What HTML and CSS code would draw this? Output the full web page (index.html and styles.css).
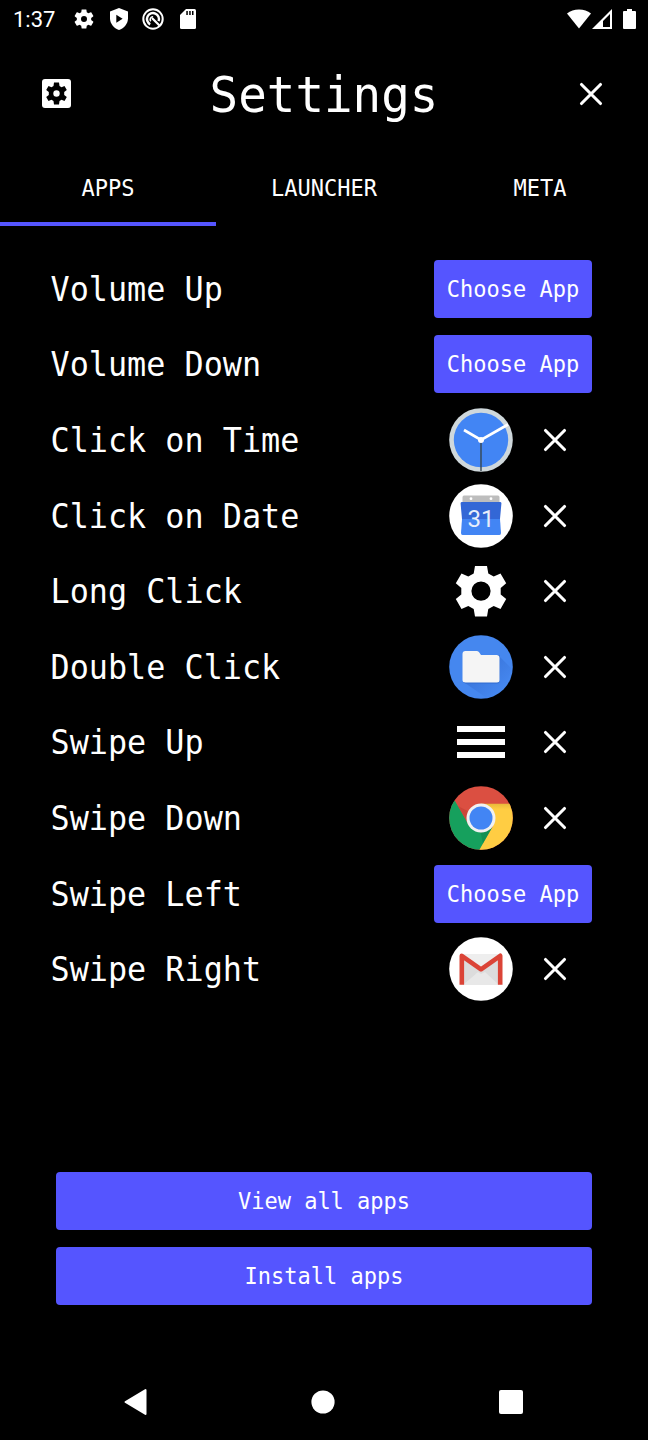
FILE: index.html
```html
<!DOCTYPE html>
<html lang="en">
<head>
<meta charset="utf-8">
<title>Settings</title>
<link rel="stylesheet" href="styles.css">
</head>
<body>
<svg class="defs" width="0" height="0">
  <defs>
    <symbol id="close" viewBox="0 0 24 24"><path d="M2.500 2.500 21.500 21.500M21.500 2.500 2.500 21.500" stroke="#fff" stroke-width="3.100" stroke-linecap="round"/></symbol>
    <symbol id="gear" viewBox="0 0 24 24"><path fill="#fff" d="M19.14 12.94c.04-.3.06-.61.06-.94 0-.32-.02-.64-.07-.94l2.03-1.58c.18-.14.23-.41.12-.61l-1.92-3.32c-.12-.22-.37-.29-.59-.22l-2.39.96c-.5-.38-1.03-.7-1.62-.94l-.36-2.54c-.04-.24-.24-.41-.48-.41h-3.84c-.24 0-.43.17-.47.41l-.36 2.54c-.59.24-1.13.57-1.62.94l-2.39-.96c-.22-.08-.47 0-.59.22L2.74 8.87c-.12.21-.08.47.12.61l2.03 1.58c-.05.3-.09.63-.09.94s.02.64.07.94l-2.03 1.58c-.18.14-.23.41-.12.61l1.92 3.32c.12.22.37.29.59.22l2.39-.96c.5.38 1.03.7 1.62.94l.36 2.54c.05.24.24.41.48.41h3.84c.24 0 .44-.17.47-.41l.36-2.54c.59-.24 1.13-.56 1.62-.94l2.39.96c.22.08.47 0 .59-.22l1.92-3.32c.12-.22.07-.47-.12-.61l-2.01-1.58zM12 15a3 3 0 1 1 0-6 3 3 0 0 1 0 6z"/></symbol>
  </defs>
</svg>
<div class="screen">
  <div class="status">
    <span class="time">1:37</span>
    <svg class="s-gear" viewBox="0 0 24 24"><use href="#gear"/></svg>
    <svg class="s-shield" viewBox="0 0 18 22"><path fill="#fff" d="M9 0 18 3.400v6.800c0 5.500-3.800 9.800-9 11.800-5.200-2-9-6.300-9-11.800V3.400z"/><path d="M6.300 6.700v8l6.300-4z"/></svg>
    <svg class="s-round" viewBox="0 0 22 22" fill="none" stroke="#fff"><circle cx="11" cy="11" r="9.700" stroke-width="2"/><path stroke-width="2.400" d="M8.200 16.400a6 6 0 1 1 8.400-3.200"/><path stroke-width="2.200" d="m10 10 7.500 7.500"/><path stroke-width="1.600" d="M8.800 13.300a2.800 2.800 0 0 1 2.300-4.600"/></svg>
    <svg class="s-card" viewBox="0 0 16 20"><path fill="#fff" d="M6 0h8.500Q16 0 16 1.500v17q0 1.500-1.500 1.500h-13Q0 20 0 18.500V6z"/><path d="M6.300 2h1.500v4H6.300zM9.200 2h1.500v4H9.200zM12 2h1.500v4H12z"/></svg>
    <span class="spacer"></span>
    <svg class="s-wifi" viewBox="0 0 24 20"><path fill="#fff" d="M0 4.600Q5 .500 12 .500t12 4.100L12 19.500z"/></svg>
    <svg class="s-signal" viewBox="0 0 20 20"><path fill="#fff" fill-rule="evenodd" d="M0 20 20 0v20zM18 5 11 12v6h7z"/></svg>
    <svg class="s-battery" viewBox="0 0 13 20"><path fill="#fff" d="M4 0h5v2h3q1 0 1 1v16q0 1-1 1H1q-1 0-1-1V3q0-1 1-1h3z"/></svg>
  </div>
  <header class="header">
    <svg class="app-settings" viewBox="0 0 29 29"><rect width="29" height="29" rx="3" fill="#fff"/><path d="M12 3.500h5l.5 3.600 2 1.100 3-1.200 2.300 3.900-2.600 2v3.200l2.600 2-2.300 3.900-3-1.200-2 1.100-.5 3.600h-5l-.5-3.600-2-1.100-3 1.200-2.300-3.900 2.600-2v-3.200l-2.600-2 2.300-3.900 3 1.200 2-1.100z"/><circle cx="14.500" cy="14.500" r="3.200" fill="#fff"/></svg>
    <h1 class="title">Settings</h1>
    <svg class="close"><use href="#close"/></svg>
  </header>
  <nav class="tabs">
    <div class="tab active"><span class="tall">APPS</span></div><div class="tab"><span class="tall">LAUNCHER</span></div><div class="tab"><span class="tall">META</span></div>
  </nav>
  <main class="list">
    <div class="row"><span class="label">Volume Up</span><button class="btn choose"><span class="tall">Choose App</span></button></div>
    <div class="row"><span class="label">Volume Down</span><button class="btn choose"><span class="tall">Choose App</span></button></div>
    <div class="row"><span class="label">Click on Time</span><span class="picked">
      <svg class="app" viewBox="0 0 64 64"><circle cx="32" cy="32" r="31.800" fill="#cfd8dc"/><circle cx="32" cy="32" r="27.200" fill="#4285f4"/><path d="M32 32v31" stroke="#37474f" stroke-width="1.400"/><path d="M15 22 32 32l27-15.500" fill="none" stroke="#fff" stroke-width="2.700"/><circle cx="32" cy="32" r="3" fill="#fff"/></svg>
      <svg class="close"><use href="#close"/></svg></span></div>
    <div class="row"><span class="label">Click on Date</span><span class="picked">
      <svg class="app" viewBox="0 0 64 64"><circle cx="32" cy="32" r="31.800" fill="#fff"/><path fill="#bdbdbd" d="M15 11.500h34q1.500 0 1.500 2V20h-37v-6.500q0-2 1.500-2z"/><circle cx="22" cy="14.700" r="1.400" fill="#fff"/><circle cx="42" cy="14.700" r="1.400" fill="#fff"/><path fill="#3367d6" d="M13 18h38q1.500 0 1.400 1.500L51 35H13l-1.400-15.500Q11.500 18 13 18z"/><path fill="#4285f4" d="M13 35h38l1 14q0 2-1.500 2h-37Q12 51 12 49z"/><text class="date" x="32" y="43" text-anchor="middle">31</text></svg>
      <svg class="close"><use href="#close"/></svg></span></div>
    <div class="row"><span class="label">Long Click</span><span class="picked">
      <svg class="app" viewBox="0 0 64 64"><path fill="#fff" fill-rule="evenodd" d="M26 7h12l1.300 7.500 5.400 3L51.500 14.500l5.700 9.800-5.500 4.700v6.500l5.500 4.500-5.700 10-6.800-3-5.400 3L38 57.500H26L24.700 50l-5.400-3-6.800 3-5.700-10 5.500-4.500V29l-5.500-4.700 5.700-9.800 6.800 3 5.400-3zM32 22.500a9.600 9.600 0 1 0 0 19.200 9.600 9.600 0 0 0 0-19.200z"/></svg>
      <svg class="close"><use href="#close"/></svg></span></div>
    <div class="row"><span class="label">Double Click</span><span class="picked">
      <svg class="app" viewBox="0 0 64 64"><defs><linearGradient id="fs" x1="0" y1="0" x2="1" y2="1"><stop offset=".3" stop-color="#3a76dc"/><stop offset=".8" stop-color="#4587ef"/></linearGradient></defs><circle cx="32" cy="32" r="31.800" fill="#4587ef"/><path fill="url(#fs)" d="M50 21 62 33Q60 55 38 63.200L16 48z"/><path fill="#2f6bd0" d="M14 20h36.500v26q0 2.500-2.500 2.500H17q-3 0-3-3z"/><path fill="#f5f5f5" d="M16.500 16H28q1.500 0 2.300 1.500L32 20h15.500q3 0 3 3v22q0 2.500-2.500 2.500H16.500Q13.500 47.500 13.500 45V19q0-3 3-3z"/></svg>
      <svg class="close"><use href="#close"/></svg></span></div>
    <div class="row"><span class="label">Swipe Up</span><span class="picked">
      <svg class="app" viewBox="0 0 64 64"><path fill="#fff" d="M8 16h48v6H8zM8 29h48v6H8zM8 42h48v6H8z"/></svg>
      <svg class="close"><use href="#close"/></svg></span></div>
    <div class="row"><span class="label">Swipe Down</span><span class="picked">
      <svg class="app" viewBox="0 0 64 64"><defs><clipPath id="cc"><circle cx="32" cy="32" r="31.800"/></clipPath><linearGradient id="cy" x1="0" y1="0" x2="0" y2="1"><stop offset="0" stop-color="#e8b93a"/><stop offset=".12" stop-color="#ffcd43"/></linearGradient></defs><g clip-path="url(#cc)"><path fill="#db4f41" d="M0 0h64v64H0z"/><path fill="#16a05d" d="M6 15 20 39.500l12 7 12-5L30.500 64H0V15z"/><path fill="url(#cy)" d="M32 17.700h32V64H30.300L44 40z"/><path fill="#a83228" opacity=".3" d="m9 20 10.500 18 1-12z"/><path fill="#0b7242" opacity=".35" d="m34 57.500 9.500-16.500-12 5z"/></g><circle cx="32" cy="32" r="14.500" fill="#f1f1f1"/><circle cx="32" cy="32" r="11.500" fill="#4285f4"/></svg>
      <svg class="close"><use href="#close"/></svg></span></div>
    <div class="row"><span class="label">Swipe Left</span><button class="btn choose"><span class="tall">Choose App</span></button></div>
    <div class="row"><span class="label">Swipe Right</span><span class="picked">
      <svg class="app" viewBox="0 0 64 64"><circle cx="32" cy="32" r="31.800" fill="#fff"/><path fill="#eee" d="M12 17h40v31H12z"/><path fill="#dcdcdc" d="m14 21 18 14 18-14v27H42L30 36 14 48z"/><path fill="#e8e8e8" d="m14 48 15-13 3 2 4-2 14 13z"/><path fill="none" stroke="#db4437" stroke-width="4.600" stroke-linejoin="round" d="M12.800 47.800V18.800L32 32.300l19.200-13.500v29"/></svg>
      <svg class="close"><use href="#close"/></svg></span></div>
  </main>
  <footer class="actions">
    <button class="btn"><span class="tall">View all apps</span></button>
    <button class="btn"><span class="tall">Install apps</span></button>
  </footer>
  <div class="nav">
    <svg class="n-back" viewBox="0 0 24 28"><path fill="#fff" stroke="#fff" stroke-width="2" stroke-linejoin="round" d="M1.500 14 21.500 2v24z"/></svg>
    <svg class="n-home" viewBox="0 0 24 24"><circle cx="12" cy="12" r="11.600" fill="#fff"/></svg>
    <svg class="n-recent" viewBox="0 0 24 24"><rect width="24" height="24" rx="2" fill="#fff"/></svg>
  </div>
</div>
</body>
</html>
```
FILE: styles.css
```css
* { box-sizing: border-box; }
body { margin: 0; background: #000; color: #fff; font-family: "DejaVu Sans Mono", monospace; }
svg { display: block; flex: none; }
.defs { position: absolute; }
.screen { width: 648px; height: 1440px; display: flex; flex-direction: column; background: #000; overflow: hidden; }
.status { height: 38px; display: flex; align-items: center; padding: 0 12px 0 13px; flex: none; }
.time { font: 22px/38px Roboto, sans-serif; width: 60px; padding-top: 1px; }
.s-gear { width: 24px; height: 24px; margin-right: 12px; margin-left: -1px; }
.s-shield { width: 18px; height: 22px; margin-right: 14px; margin-left: 2px; }
.s-round { width: 22px; height: 22px; margin-right: 16px; }
.s-card { width: 16px; height: 20px; }
.spacer { flex: 1; }
.s-wifi { width: 24px; height: 20px; margin-right: 1px; }
.s-signal { width: 20px; height: 20px; margin-right: 11px; }
.s-battery { width: 13px; height: 20px; }
.header { height: 111px; display: flex; align-items: center; justify-content: space-between; padding: 0 45px 0 42px; flex: none; }
.app-settings { width: 29px; height: 29px; }
.title { margin: 0; padding: 2px 2px 0 0; font-size: 47.500px; font-weight: 400; line-height: 56px; transform: scaleY(1.03); }
.close { width: 24px; height: 24px; }
.tabs { display: grid; grid-template-columns: repeat(3, 1fr); height: 77px; flex: none; }
.tab { height: 77px; font-size: 22px; line-height: 79px; text-align: center; }
.active { border-bottom: 4px solid #5555ff; }
.tall { display: inline-block; transform: scaleY(1.05); }
.list { padding: 25px 56px 0 50.500px; height: 945.600px; flex: none; }
.row { height: 75.600px; display: flex; align-items: center; justify-content: space-between; }
.label { padding-top: 1px; font-size: 31.800px; white-space: pre; transform: scaleY(1.04); }
.picked { display: flex; align-items: center; gap: 30.500px; padding-right: 25px; }
.app { width: 64px; height: 64px; }
.date { font: 24px Roboto, sans-serif; fill: #e8eefb; }
.btn { display: block; border: 0; padding: 1px 0 0; height: 58px; border-radius: 4px; background: #5555ff; color: #fff; font: 22px "DejaVu Sans Mono", monospace; }
.choose { width: 158px; }
.actions { display: flex; flex-direction: column; gap: 17.500px; padding: 0 56px; height: 192px; flex: none; }
.nav { height: 76px; display: flex; align-items: center; justify-content: space-between; padding: 0 125.500px 0 124px; }
.n-back { width: 24px; height: 28px; }
.n-home { width: 24px; height: 24px; }
.n-recent { width: 24px; height: 24px; }
```
